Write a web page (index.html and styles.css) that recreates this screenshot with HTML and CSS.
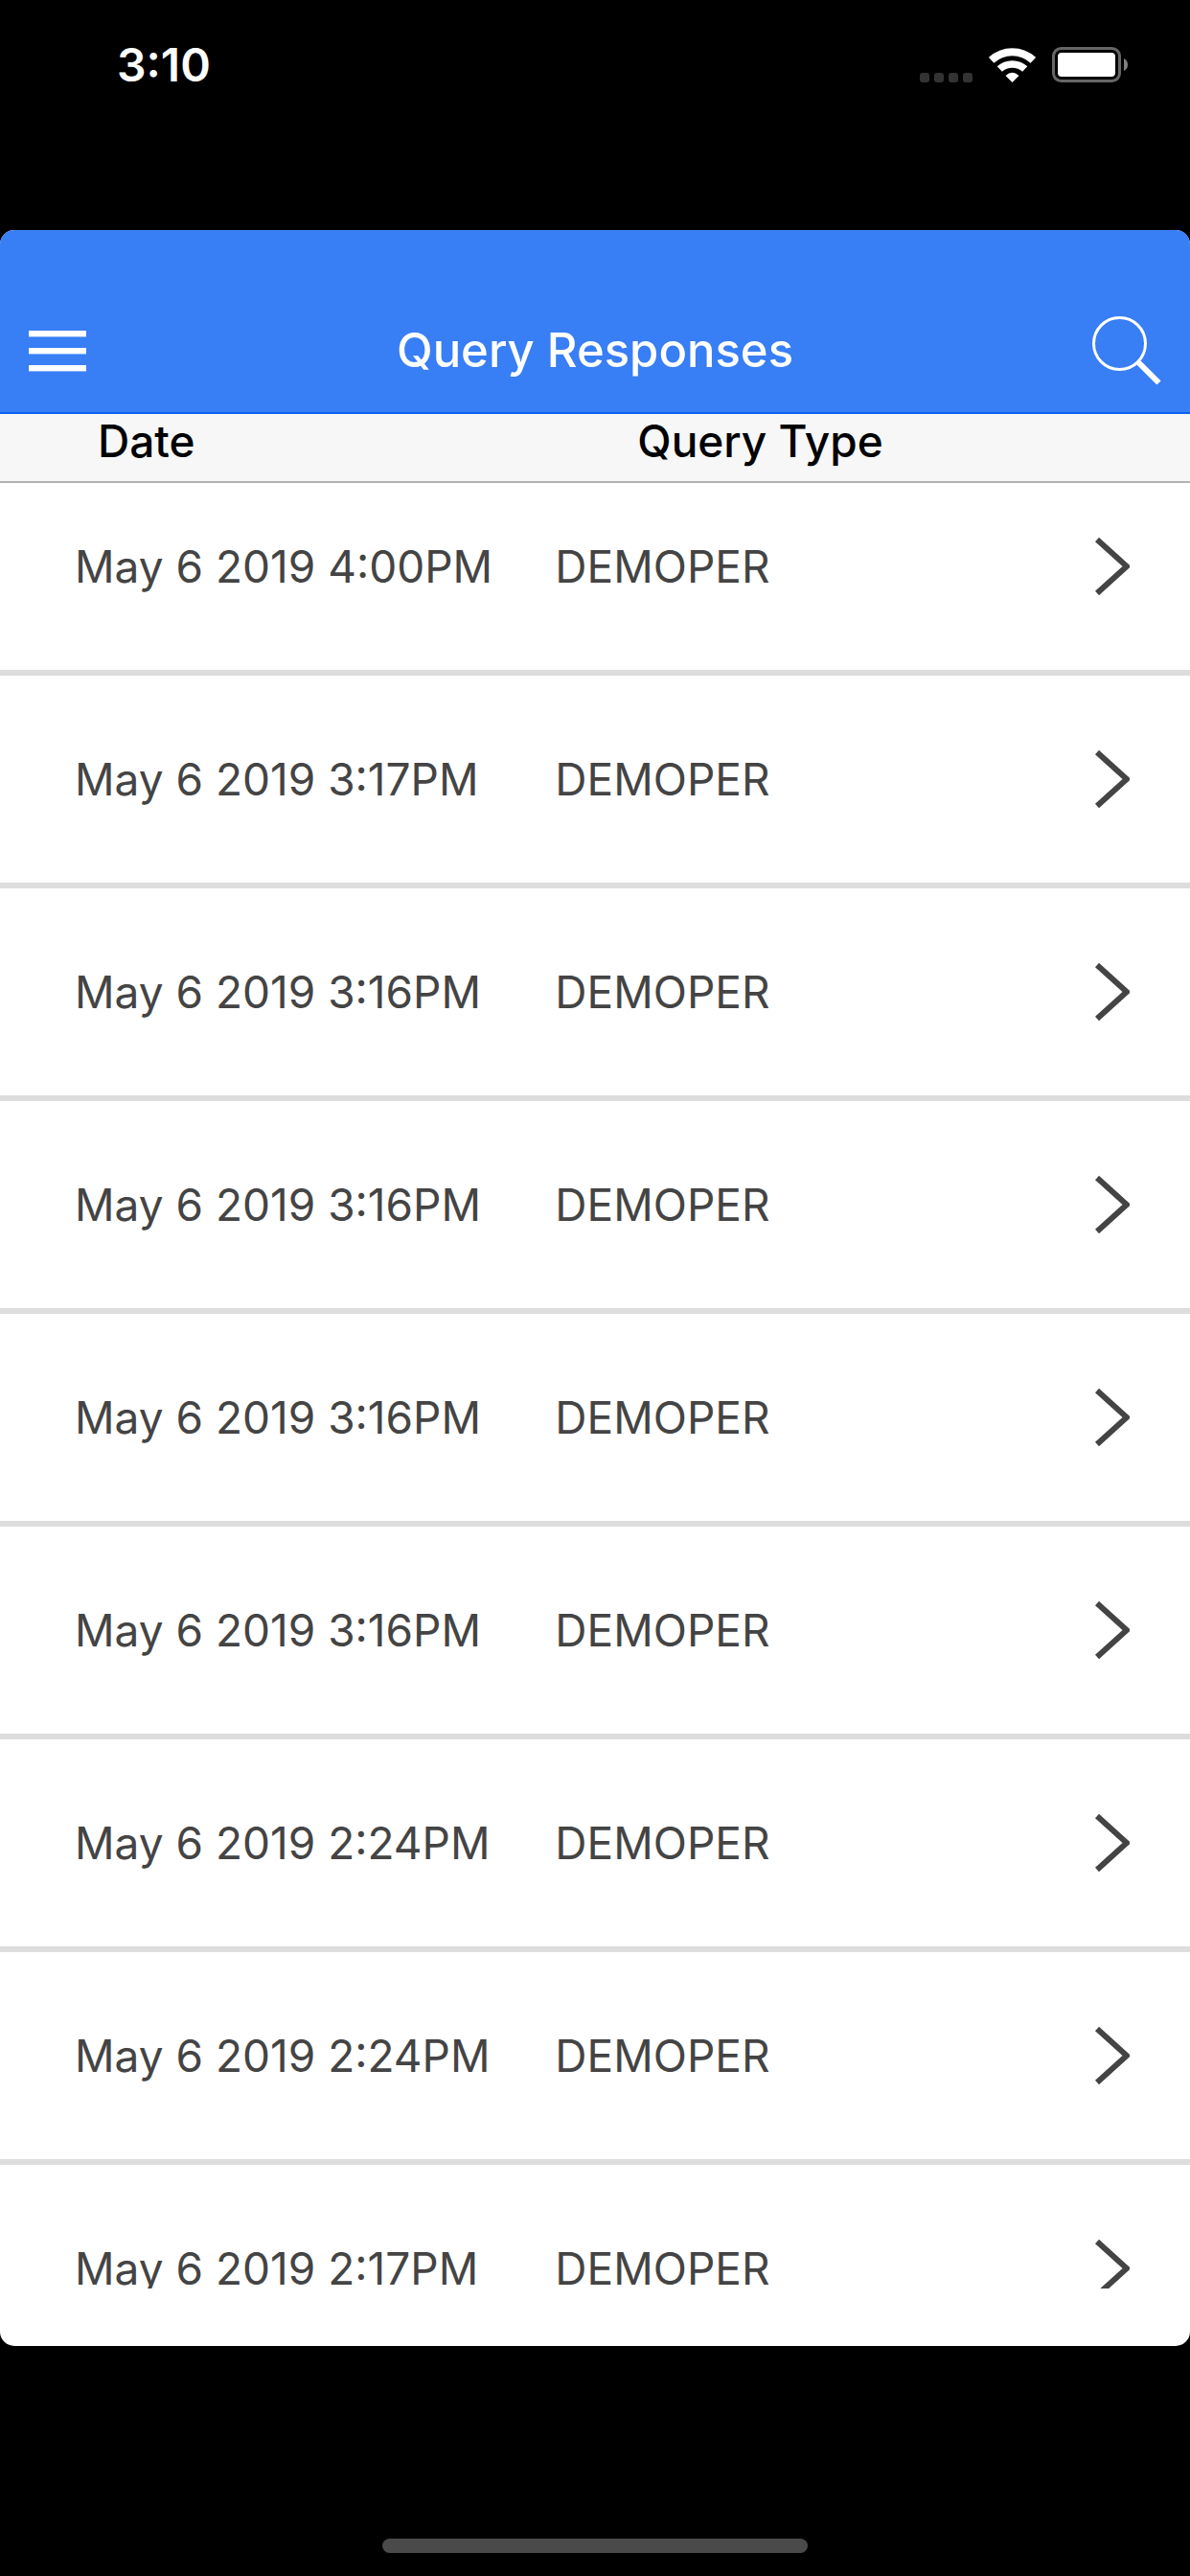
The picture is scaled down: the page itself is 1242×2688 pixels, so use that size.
FILE: index.html
```html
<!DOCTYPE html>
<html lang="en">
	<head>
		<meta charset="UTF-8">
		<meta name="viewport" content="width=device-width, initial-scale=1">
		<title>Query Responses</title>
		<link rel="stylesheet" href="styles.css">
	</head>
	<body>
		<div class="status-bar">
			<span class="time">3:10</span>
			<div class="status-icons">
				<svg class="signal" viewBox="0 0 55 10" fill="#333">
					<rect x="0" width="10" height="10" rx="3"/>
					<rect x="15" width="10" height="10" rx="3"/>
					<rect x="30" width="10" height="10" rx="3"/>
					<rect x="45" width="10" height="10" rx="3"/>
				</svg>
				<svg class="wifi" viewBox="0 0 49 36" fill="none" stroke="#fff">
					<path d="M2.7 12.8A32 32 0 0 1 46.3 12.8" stroke-width="8"/>
					<path d="M11.3 22.1A19.3 19.3 0 0 1 37.7 22.1" stroke-width="7.5"/>
					<path d="M24.5 36L17.5 29Q24.5 22.4 31.5 29Z" fill="#fff" stroke="none"/>
				</svg>
				<svg class="battery" viewBox="0 0 79 37">
					<rect x="1.5" y="1.5" width="69" height="34" rx="8" fill="none" stroke="#666" stroke-width="3"/>
					<rect x="6" y="6" width="60" height="25" rx="4" fill="#fff"/>
					<path d="M75 12Q79 14 79 18.5T75 25Z" fill="#808080"/>
				</svg>
			</div>
		</div>

		<main class="app">
			<header class="nav-bar">
				<button class="nav-button" type="button" aria-label="Menu">
					<svg class="menu-icon" viewBox="0 0 60 43" fill="#fff">
						<rect y="0" width="60" height="6.4"/>
						<rect y="18" width="60" height="6.4"/>
						<rect y="36" width="60" height="6.4"/>
					</svg>
				</button>
				<h1 class="title">Query Responses</h1>
				<button class="nav-button" type="button" aria-label="Search">
					<svg class="search-icon" viewBox="0 0 72 72" fill="none" stroke="#fff">
						<circle cx="28.5" cy="28.5" r="27" stroke-width="3"/>
						<path d="M47.5 47.5L69.5 69.5" stroke-width="6"/>
					</svg>
				</button>
			</header>

			<div class="list">
				<table class="responses">
					<thead>
						<tr>
							<th class="date">Date</th>
							<th class="type">Query Type</th>
							<th class="more"></th>
						</tr>
					</thead>
					<tbody>
						<tr>
							<td class="date">May 6 2019 4:00PM</td>
							<td class="type">DEMOPER</td>
							<td class="more"><a href="#" aria-label="Open response"><svg class="chevron" viewBox="0 0 36 60"><path d="M2 2L33 30L2 58"/></svg></a></td>
						</tr>
						<tr>
							<td class="date">May 6 2019 3:17PM</td>
							<td class="type">DEMOPER</td>
							<td class="more"><a href="#" aria-label="Open response"><svg class="chevron" viewBox="0 0 36 60"><path d="M2 2L33 30L2 58"/></svg></a></td>
						</tr>
						<tr>
							<td class="date">May 6 2019 3:16PM</td>
							<td class="type">DEMOPER</td>
							<td class="more"><a href="#" aria-label="Open response"><svg class="chevron" viewBox="0 0 36 60"><path d="M2 2L33 30L2 58"/></svg></a></td>
						</tr>
						<tr>
							<td class="date">May 6 2019 3:16PM</td>
							<td class="type">DEMOPER</td>
							<td class="more"><a href="#" aria-label="Open response"><svg class="chevron" viewBox="0 0 36 60"><path d="M2 2L33 30L2 58"/></svg></a></td>
						</tr>
						<tr>
							<td class="date">May 6 2019 3:16PM</td>
							<td class="type">DEMOPER</td>
							<td class="more"><a href="#" aria-label="Open response"><svg class="chevron" viewBox="0 0 36 60"><path d="M2 2L33 30L2 58"/></svg></a></td>
						</tr>
						<tr>
							<td class="date">May 6 2019 3:16PM</td>
							<td class="type">DEMOPER</td>
							<td class="more"><a href="#" aria-label="Open response"><svg class="chevron" viewBox="0 0 36 60"><path d="M2 2L33 30L2 58"/></svg></a></td>
						</tr>
						<tr>
							<td class="date">May 6 2019 2:24PM</td>
							<td class="type">DEMOPER</td>
							<td class="more"><a href="#" aria-label="Open response"><svg class="chevron" viewBox="0 0 36 60"><path d="M2 2L33 30L2 58"/></svg></a></td>
						</tr>
						<tr>
							<td class="date">May 6 2019 2:24PM</td>
							<td class="type">DEMOPER</td>
							<td class="more"><a href="#" aria-label="Open response"><svg class="chevron" viewBox="0 0 36 60"><path d="M2 2L33 30L2 58"/></svg></a></td>
						</tr>
						<tr>
							<td class="date">May 6 2019 2:17PM</td>
							<td class="type">DEMOPER</td>
							<td class="more"><a href="#" aria-label="Open response"><svg class="chevron" viewBox="0 0 36 60"><path d="M2 2L33 30L2 58"/></svg></a></td>
						</tr>
					</tbody>
				</table>
			</div>
		</main>

		<div class="home-area">
			<div class="home-indicator"></div>
		</div>
	</body>
</html>
```

FILE: styles.css
```css
*{
	box-sizing: border-box;
}
body{
	margin: 0;
	height: 100vh;
	display: flex;
	flex-direction: column;
	background: #000;
	font-family: Inter, "Liberation Sans", sans-serif;
	font-size: 46px;
	color: #444;
}
svg{
	display: block;
}

/* status bar */
.status-bar{
	flex: 0 0 240px;
	display: flex;
	justify-content: space-between;
	align-items: flex-start;
	padding: 40px 65px 0 122px;
	color: #fff;
}
.time{
	font-size: 48px;
	font-weight: 600;
	line-height: 56px;
}
.status-icons{
	display: flex;
	align-items: flex-end;
	gap: 17px;
	padding-top: 9px;
}
.signal{
	width: 55px;
	height: 10px;
}
.wifi{
	width: 49px;
	height: 36px;
}
.battery{
	width: 79px;
	height: 37px;
}

/* app window */
.app{
	flex: 1;
	min-height: 0;
	display: flex;
	flex-direction: column;
	padding-bottom: 60px;
	border-radius: 15px;
	overflow: hidden;
	background: #fff;
}
.nav-bar{
	flex: 0 0 192px;
	display: flex;
	justify-content: space-between;
	align-items: flex-end;
	padding: 0 30px 28px;
	background: #387ef5;
	border-bottom: 2px solid #0c60ee;
	color: #fff;
}
.nav-button{
	display: flex;
	align-items: center;
	width: 72px;
	height: 72px;
	padding: 0;
	border: 0;
	background: none;
}
.menu-icon{
	width: 60px;
	height: 43px;
}
.search-icon{
	width: 72px;
	height: 72px;
}
.title{
	margin: 0;
	font-size: 49px;
	font-weight: 500;
	line-height: 72px;
}

/* list */
.list{
	flex: 1;
	min-height: 0;
	overflow-y: auto;
	scrollbar-width: none;
}
.responses{
	width: 100%;
	table-layout: fixed;
	border-collapse: separate;
	border-spacing: 0;
}
.responses th{
	height: 72px;
	padding: 0 0 14px;
	background: #f7f7f7;
	border-bottom: 2px solid #b2b2b2;
	color: #000;
	font-weight: 500;
	line-height: 56px;
	text-align: left;
}
.responses td{
	height: 222px;
	padding: 0;
	border-bottom: 6px solid #ddd;
	line-height: 62px;
	white-space: nowrap;
}
/* first row sits tight under the column heads */
.responses tbody tr:first-child td{
	height: 201px;
	padding-bottom: 21px;
}
.responses .date{
	width: 46%;
	padding-left: 78px;
}
.responses th.date{
	padding-left: 102px;
}
.responses .type{
	padding-left: 8px;
}
.responses th.type{
	padding-left: 94px;
}
.responses .more{
	width: 99px;
}
.chevron{
	width: 36px;
	height: 60px;
	fill: none;
	stroke: #444;
	stroke-width: 6;
}

/* home indicator */
.home-area{
	flex: 0 0 240px;
	display: flex;
	justify-content: center;
	align-items: flex-end;
	padding-bottom: 24px;
}
.home-indicator{
	width: 444px;
	height: 15px;
	border-radius: 8px;
	background: #4a4a4a;
}
```
